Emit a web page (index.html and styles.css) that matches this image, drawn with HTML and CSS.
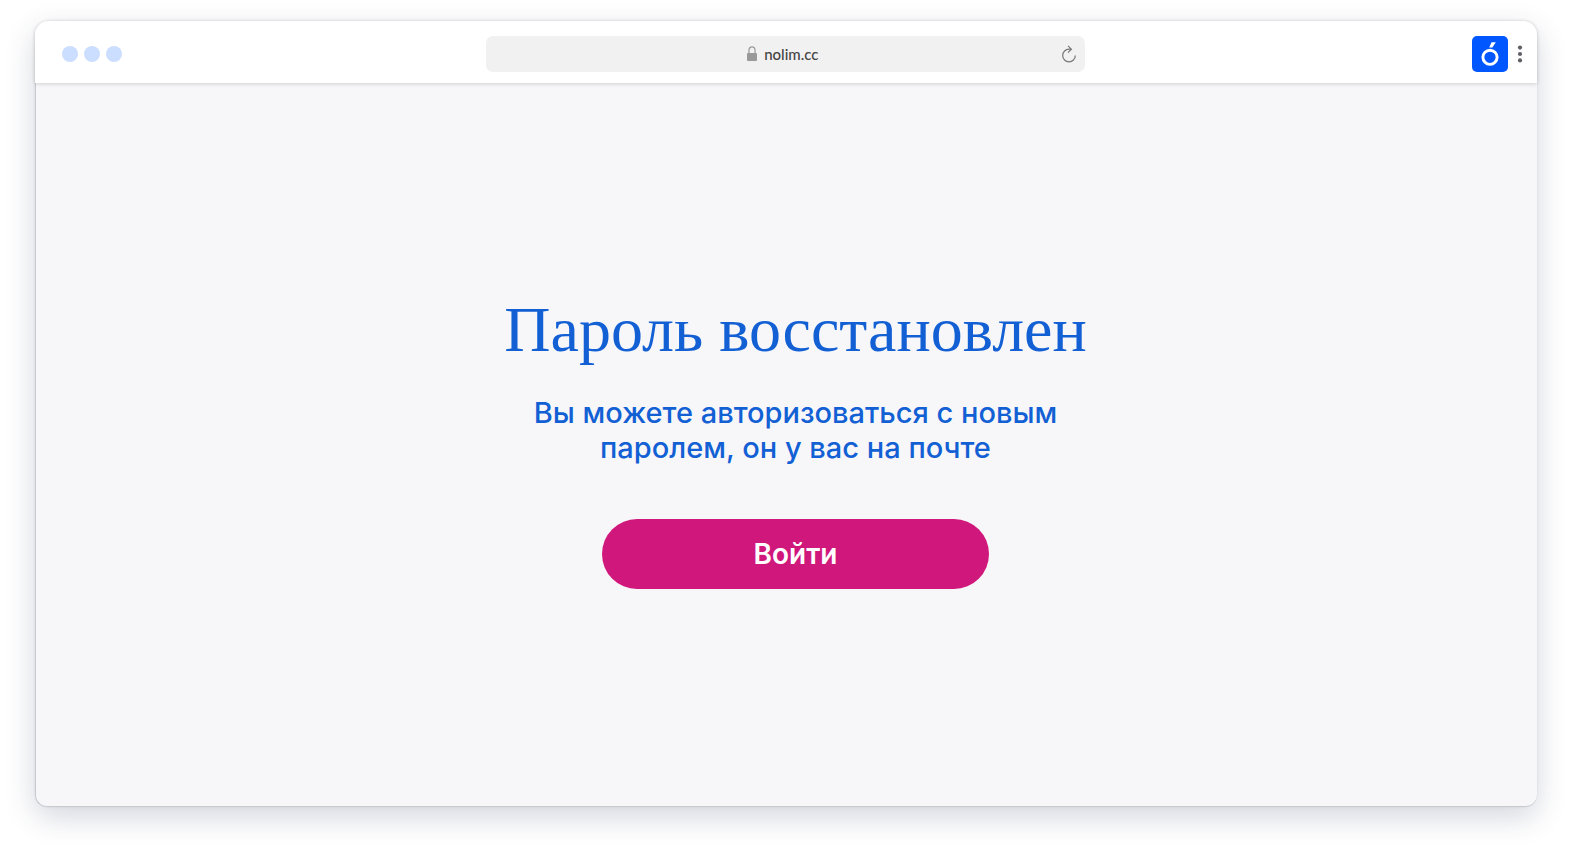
FILE: index.html
```html
<!DOCTYPE html>
<html lang="ru">
    <head>
        <meta charset="UTF-8">
        <meta name="viewport" content="width=device-width, initial-scale=1">
        <title>Пароль восстановлен</title>
        <link rel="stylesheet" href="styles.css">
    </head>
    <body>
        <div class="window">
            <header class="toolbar">
                <div class="dots">
                    <span class="dot"></span>
                    <span class="dot"></span>
                    <span class="dot"></span>
                </div>
                <div class="address">
                    <div class="address-site">
                        <svg width="12" height="16" viewBox="0 0 12 16" aria-hidden="true">
                            <path d="M3 8V4.2a3 3.4 0 0 1 6 0V8" fill="none" stroke="#999" stroke-width="1.2"/>
                            <rect x="1" y="7" width="10" height="8" rx="1" fill="#999"/>
                        </svg>
                        <input class="address-input" type="text" value="nolim.cc" aria-label="Адрес сайта">
                    </div>
                    <button class="icon-button" type="button" aria-label="Обновить">
                        <svg width="16" height="18" viewBox="0 0 16 18" aria-hidden="true">
                            <path d="M9.6 4.2H8a6.3 6.3 0 1 0 6.3 6.3M7 .8L10.4 4.2L7 7.6" fill="none" stroke="#777" stroke-width="1.2"/>
                        </svg>
                    </button>
                </div>
                <div class="actions">
                    <svg class="logo" width="36" height="36" viewBox="0 0 36 36" aria-hidden="true">
                        <rect width="36" height="36" rx="5" fill="#0057ff"/>
                        <circle cx="18" cy="21.3" r="7.1" fill="none" stroke="#fff" stroke-width="2.9"/>
                        <path d="M19.5 6.2h4.3l-3.4 5.4h-3.2z" fill="#fff"/>
                    </svg>
                    <button class="icon-button" type="button" aria-label="Меню">
                        <svg width="6" height="18" viewBox="0 0 6 18" aria-hidden="true" fill="#5f6066">
                            <circle cx="3" cy="2.6" r="2.1"/>
                            <circle cx="3" cy="9" r="2.1"/>
                            <circle cx="3" cy="15.4" r="2.1"/>
                        </svg>
                    </button>
                </div>
            </header>
            <main class="page">
                <h1>Пароль восстановлен</h1>
                <p>Вы можете авторизоваться с новым<br>паролем, он у вас на почте</p>
                <button class="login" type="button">Войти</button>
            </main>
        </div>
    </body>
</html>
```
FILE: styles.css
```css
* { box-sizing: border-box; }
body {
    display: flex;
    min-height: 100vh;
    margin: 0;
    padding: 21px 35px 49px;
    background: #fff;
    font-family: Inter, sans-serif;
}
button { padding: 0; border: 0; cursor: pointer; }
svg { display: block; }

.window {
    display: flex;
    flex: 1;
    flex-direction: column;
    border-radius: 14px;
    box-shadow: 0 10px 30px rgba(40, 50, 90, 0.2), 0 0 3px rgba(0, 0, 0, 0.08);
}
.toolbar {
    display: grid;
    grid-template-columns: 29% 41% 1fr;
    align-items: center;
    height: 62px;
    padding: 4px 14px 0 27px;
    border-radius: 14px 14px 0 0;
    background: #fff;
    box-shadow: 0 1px 4px rgba(0, 0, 0, 0.16);
    z-index: 1;
}
.dots { display: flex; gap: 6px; }
.dot { width: 16px; height: 16px; border-radius: 50%; background: #ccdeff; }

.address {
    display: flex;
    align-items: center;
    height: 36px;
    padding: 0 8px 0 20px;
    border-radius: 7px;
    background: #f1f1f1;
}
.address-site { display: flex; flex: 1; align-items: center; justify-content: center; gap: 6px; }
.address-input {
    width: 56px;
    padding: 0;
    border: 0;
    background: none;
    color: #444;
    font: 500 15px Lato, sans-serif;
}
.icon-button { background: none; }
.actions { display: flex; align-items: center; justify-content: flex-end; gap: 9px; }

.page {
    display: flex;
    flex: 1;
    flex-direction: column;
    align-items: center;
    padding: 209px 0 0 18px;
    border: 1px solid #c8cad0;
    border-width: 0 0 1px 1px;
    border-radius: 0 0 12px 12px;
    background: #f7f7fa;
    color: #1260d4;
    text-align: center;
}
h1 {
    margin: 0;
    font: 400 64px/76px "Liberation Serif", serif;
}
p {
    margin: 27px 0 54px;
    font-size: 29px;
    font-weight: 500;
    line-height: 35px;
}
.login {
    width: 387px;
    max-width: 100%;
    height: 70px;
    border-radius: 35px;
    background: #d0177b;
    color: #fff;
    font: 600 28px Inter, sans-serif;
}
```
